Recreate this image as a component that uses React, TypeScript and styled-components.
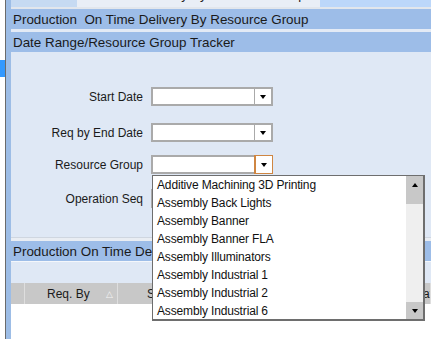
import React from 'react';
import styled, { createGlobalStyle } from 'styled-components';

const Global = createGlobalStyle`
  html, body { margin: 0; padding: 0; width: 431px; height: 339px; overflow: hidden; background: #fff; }
  body { font-family: "Liberation Sans", Arial, sans-serif; color: #1a1a1a; }
  * { box-sizing: border-box; }
`;

const Shell = styled.div`
  display: flex;
  width: 431px;
  height: 339px;
  overflow: hidden;
`;

const Rail = styled.div`
  width: 6px;
  flex: none;
  background: #fff;
  border-right: 1px solid #6b6b6b;
  padding-top: 60px;
`;

const RailMark = styled.div`
  height: 17px;
  background: #3399ff;
`;

const Strip = styled.div`
  width: 5px;
  flex: none;
  background: #9dbde6;
`;

const Main = styled.div`
  flex: 1;
  min-width: 0;
  display: flex;
  flex-direction: column;
`;

const TabBar = styled.div`
  height: 9px;
  flex: none;
  display: flex;
  border-bottom: 2px solid #e2e6ec;
  background: #e9eef6;
  overflow: hidden;
`;

const Tab = styled.div<{ $w?: number; $bg: string; $pl: number }>`
  ${p => (p.$w ? `width: ${p.$w}px; flex: none;` : 'flex: 1;')}
  background: ${p => p.$bg};
  padding-left: ${p => p.$pl}px;
  font-size: 13px;
  line-height: 13px;
  white-space: nowrap;
  overflow: hidden;
  color: #222;
`;

const TabText = styled.span`
  display: block;
  margin-top: -12px;
`;

const Header = styled.div`
  height: 20px;
  flex: none;
  background: #9dbde8;
  display: flex;
  align-items: center;
  padding-left: 2px;
  font-size: 13.4px;
  white-space: nowrap;
  overflow: hidden;
`;

const HeaderGap = styled.div`
  height: 3px;
  flex: none;
  background: #e3eaf5;
`;

const FormPanel = styled.div`
  height: 185px;
  flex: none;
  background: #dfe8f5;
  padding-top: 35px;
  display: flex;
  flex-direction: column;
`;

const FormRow = styled.div<{ $mt: number }>`
  display: grid;
  grid-template-columns: 132px 122px;
  column-gap: 8px;
  align-items: center;
  margin-top: ${p => p.$mt}px;
`;

const Label = styled.div`
  text-align: right;
  font-size: 12px;
  white-space: nowrap;
`;

const Combo = styled.div<{ $z?: number }>`
  position: relative;
  z-index: ${p => p.$z ?? 1};
  height: 19px;
  display: flex;
  background: #fff;
  border: 2px solid #aaaaaa;
`;

const ComboField = styled.div`
  flex: 1;
`;

const ComboButton = styled.div<{ $focus?: boolean }>`
  width: 17px;
  flex: none;
  display: flex;
  align-items: center;
  justify-content: center;
  background: #fff;
  border-left: 1px solid ${p => (p.$focus ? '#cf8642' : '#aaaaaa')};
  ${p => (p.$focus ? 'box-shadow: 0 0 0 1px #cf8642; margin: -1px -1px -1px 0;' : '')}
`;

const ArrowDown = styled.div<{ $c?: string }>`
  width: 0;
  height: 0;
  border-left: 3.5px solid transparent;
  border-right: 3.5px solid transparent;
  border-top: 4px solid ${p => p.$c ?? '#000'};
`;

const ArrowUp = styled.div`
  width: 0;
  height: 0;
  border-left: 3.5px solid transparent;
  border-right: 3.5px solid transparent;
  border-bottom: 4px solid #000;
`;

const Popup = styled.div`
  position: absolute;
  top: 18px;
  left: -1px;
  width: 273px;
  height: 146px;
  background: #fff;
  border: 1px solid #6e6e6e;
  border-right-width: 2px;
  border-bottom-width: 2px;
  display: flex;
  z-index: 5;
`;

const List = styled.div`
  flex: 1;
  overflow: hidden;
`;

const Item = styled.div`
  height: 18px;
  line-height: 18px;
  padding-left: 4px;
  font-size: 12px;
  letter-spacing: -0.15px;
  white-space: nowrap;
  color: #111;
`;

const Scroll = styled.div`
  width: 17px;
  flex: none;
  display: flex;
  flex-direction: column;
  background: #efefef;
`;

const ScrollUp = styled.div`
  height: 28px;
  background: #c8c8c8;
  display: flex;
  justify-content: center;
  padding-top: 7px;
`;

const ScrollTrack = styled.div`
  flex: 1;
`;

const ScrollDown = styled.div`
  height: 17px;
  background: #c8c8c8;
  display: flex;
  align-items: center;
  justify-content: center;
`;

const PanelGap = styled.div`
  height: 4px;
  flex: none;
  border-top: 1px solid #cfd6e0;
  background: #e9edf3;
`;

const Toolbar = styled.div`
  height: 22px;
  flex: none;
  background: #dfe8f5;
  border-top: 1px solid #f4f7fb;
`;

const ColumnRow = styled.div`
  height: 21px;
  flex: none;
  display: flex;
  background: #c8c8c8;
  font-size: 12px;
  white-space: nowrap;
  overflow: hidden;
`;

const Col = styled.div<{ $w?: number; $pl: number }>`
  ${p => (p.$w ? `width: ${p.$w}px; flex: none;` : 'flex: 1;')}
  padding-left: ${p => p.$pl}px;
  padding-right: 4px;
  display: flex;
  align-items: center;
  justify-content: space-between;
  border-right: 1px solid #dedede;
  overflow: hidden;
`;

const SortMark = styled.span`
  font-size: 9px;
  color: #f4f4f4;
`;

const Grid = styled.div`
  flex: 1;
  background: #fff;
`;

const items = [
  'Additive Machining 3D Printing',
  'Assembly Back Lights',
  'Assembly Banner',
  'Assembly Banner FLA',
  'Assembly Illuminators',
  'Assembly Industrial 1',
  'Assembly Industrial 2',
  'Assembly Industrial 6',
];

export default function App() {
  return (
    <>
      <Global />
      <Shell>
        <Rail>
          <RailMark />
        </Rail>
        <Strip />
        <Main>
          <TabBar>
            <Tab $w={66} $bg="#c6daf2" $pl={10}>
              <TabText>General</TabText>
            </Tab>
            <Tab $w={243} $bg="#e9eef6" $pl={11}>
              <TabText>On Time Delivery By Resource Group</TabText>
            </Tab>
            <Tab $bg="#bcd7fa" $pl={0} />
          </TabBar>
          <Header>Production&nbsp; On Time Delivery By Resource Group</Header>
          <HeaderGap />
          <Header>Date Range/Resource Group Tracker</Header>
          <FormPanel>
            <FormRow $mt={0}>
              <Label>Start Date</Label>
              <Combo>
                <ComboField />
                <ComboButton>
                  <ArrowDown />
                </ComboButton>
              </Combo>
            </FormRow>
            <FormRow $mt={17}>
              <Label>Req by End Date</Label>
              <Combo>
                <ComboField />
                <ComboButton>
                  <ArrowDown />
                </ComboButton>
              </Combo>
            </FormRow>
            <FormRow $mt={13}>
              <Label>Resource Group</Label>
              <Combo $z={5}>
                <ComboField />
                <ComboButton $focus>
                  <ArrowDown />
                </ComboButton>
                <Popup>
                  <List>
                    {items.map(t => (
                      <Item key={t}>{t}</Item>
                    ))}
                  </List>
                  <Scroll>
                    <ScrollUp>
                      <ArrowUp />
                    </ScrollUp>
                    <ScrollTrack />
                    <ScrollDown>
                      <ArrowDown />
                    </ScrollDown>
                  </Scroll>
                </Popup>
              </Combo>
            </FormRow>
            <FormRow $mt={15}>
              <Label>Operation Seq</Label>
              <Combo>
                <ComboField />
                <ComboButton>
                  <ArrowDown />
                </ComboButton>
              </Combo>
            </FormRow>
          </FormPanel>
          <PanelGap />
          <Header>Production On Time Delivery By Resource Group</Header>
          <Toolbar />
          <ColumnRow>
            <Col $w={14} $pl={0} />
            <Col $w={93} $pl={22}>
              <span>Req. By</span>
              <SortMark>△</SortMark>
            </Col>
            <Col $w={182} $pl={29}>
              <span>Status</span>
            </Col>
            <Col $pl={89}>
              <span>Due Date</span>
            </Col>
          </ColumnRow>
          <Grid />
        </Main>
      </Shell>
    </>
  );
}
